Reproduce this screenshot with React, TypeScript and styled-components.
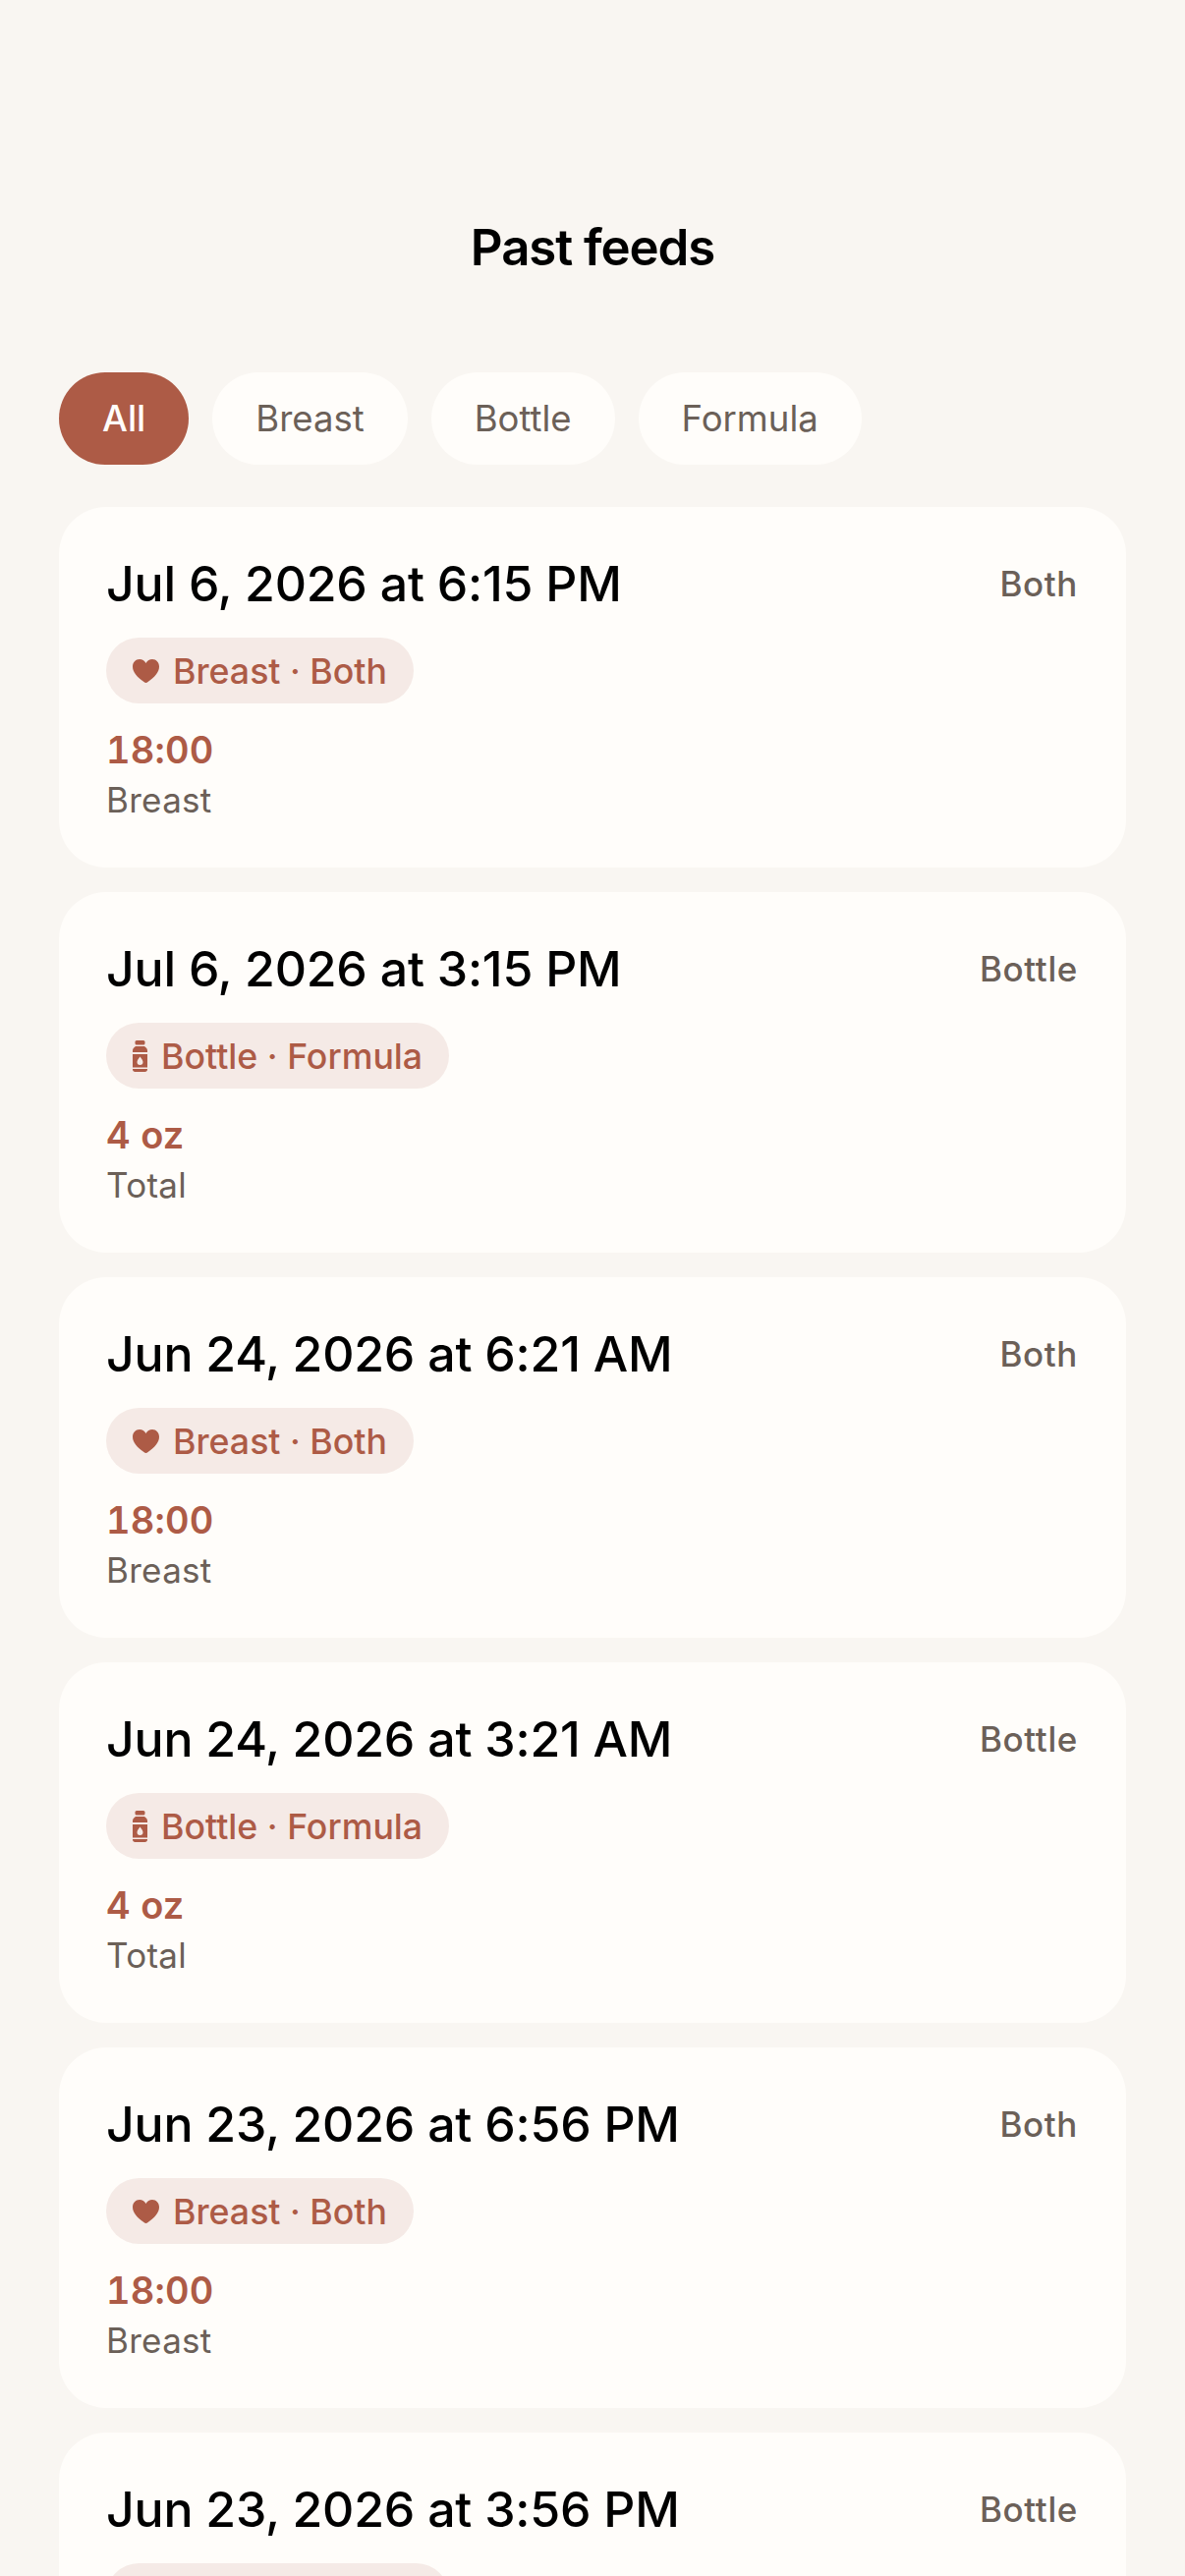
import React from "react";
import styled, { createGlobalStyle } from "styled-components";

const GlobalStyle = createGlobalStyle`
  html, body {
    margin: 0;
    padding: 0;
    background: #f9f6f2;
    font-family: "Inter", "Liberation Sans", sans-serif;
  }
`;

const Screen = styled.div`
  height: 2622px;
  overflow: hidden;
  padding: 0 60px;
  box-sizing: border-box;
`;

const Title = styled.h1`
  margin: 0;
  padding-top: 222px;
  height: 379px;
  box-sizing: border-box;
  text-align: center;
  font-size: 51px;
  line-height: 60px;
  font-weight: 600;
  letter-spacing: -1.1px;
  color: #000;
`;

const FilterRow = styled.div`
  display: flex;
  gap: 24px;
  margin-bottom: 43px;
`;

const FilterChip = styled.div<{ $active?: boolean }>`
  height: 94px;
  padding: 0 44px;
  border-radius: 47px;
  display: flex;
  align-items: center;
  font-size: 36.5px;
  font-weight: ${(props) => (props.$active ? 500 : 400)};
  color: ${(props) => (props.$active ? "#fffdfa" : "#6b6058")};
  background: ${(props) => (props.$active ? "#ad5b46" : "#fffdfa")};
`;

const FeedList = styled.div`
  display: flex;
  flex-direction: column;
  gap: 25px;
`;

const Card = styled.div`
  height: 367px;
  flex-shrink: 0;
  box-sizing: border-box;
  padding: 48px 49px 0 48px;
  border-radius: 48px;
  background: #fffdfa;
`;

const CardHead = styled.div`
  display: flex;
  justify-content: space-between;
  align-items: center;
  height: 60px;
`;

const FeedDate = styled.div`
  font-size: 50px;
  font-weight: 550;
  letter-spacing: -0.22px;
  color: #000;
`;

const FeedSide = styled.div`
  font-size: 35px;
  font-weight: 500;
  letter-spacing: 0.6px;
  color: #6b6058;
`;

const Badge = styled.div`
  display: inline-flex;
  align-items: center;
  gap: 14px;
  height: 67px;
  margin-top: 25px;
  padding: 0 27px;
  border-radius: 34px;
  background: #f5eae6;
  color: #ad5b46;
  font-size: 35.7px;
  font-weight: 450;
`;

const Amount = styled.div`
  margin-top: 24px;
  font-size: 38px;
  line-height: 46px;
  font-weight: 600;
  font-variant-numeric: tabular-nums;
  letter-spacing: 0.2px;
  color: #ad5b46;
`;

const AmountLabel = styled.div`
  margin-top: 6px;
  font-size: 35px;
  line-height: 44px;
  letter-spacing: 0.3px;
  color: #6b6058;
`;

const HeartIcon = () => (
  <svg width="27" height="24" viewBox="0 0 27 24" fill="#ad5b46">
    <path d="M13.5 24C12.9 24 12.2 23.6 11.4 23 5 18.6 0 13.6 0 7.6 0 3.2 3 0 7 0c2.8 0 5 1.4 6.5 4C15 1.4 17.200 0 20 0c4 0 7 3.200 7 7.600 0 6-5 11-11.400 15.400-.8.600-1.500 1-2.100 1z" />
  </svg>
);

const BottleIcon = () => (
  <svg width="15" height="32" viewBox="0 0 15 32" fill="#ad5b46">
    <rect x="2.500" y="0" width="10" height="4.500" rx="1.500" />
    <path
      fillRule="evenodd"
      d="M3 6h9c1.800 1.200 3 2.400 3 4.500V12H0v-1.500C0 8.400 1.200 7.200 3 6zM0 14h15v13.500H0V14zm7.500 2.600c-1.400 2-3 3.800-3 5.500a3 3 0 0 0 6 0c0-1.700-1.600-3.500-3-5.500zM0 29h15v.500c0 1.500-1 2.500-2.500 2.500h-10C1 32 0 31 0 29.500V29z"
    />
  </svg>
);

type Feed = {
  date: string;
  kind: "breast" | "bottle";
};

const feeds: Feed[] = [
  { date: "Jul 6, 2026 at 6:15 PM", kind: "breast" },
  { date: "Jul 6, 2026 at 3:15 PM", kind: "bottle" },
  { date: "Jun 24, 2026 at 6:21 AM", kind: "breast" },
  { date: "Jun 24, 2026 at 3:21 AM", kind: "bottle" },
  { date: "Jun 23, 2026 at 6:56 PM", kind: "breast" },
  { date: "Jun 23, 2026 at 3:56 PM", kind: "bottle" },
];

const FeedCard: React.FC<{ feed: Feed }> = ({ feed }) => {
  const isBreast = feed.kind === "breast";
  return (
    <Card>
      <CardHead>
        <FeedDate>{feed.date}</FeedDate>
        <FeedSide>{isBreast ? "Both" : "Bottle"}</FeedSide>
      </CardHead>
      <Badge>
        {isBreast ? <HeartIcon /> : <BottleIcon />}
        {isBreast ? "Breast · Both" : "Bottle · Formula"}
      </Badge>
      <Amount>{isBreast ? "18:00" : "4 oz"}</Amount>
      <AmountLabel>{isBreast ? "Breast" : "Total"}</AmountLabel>
    </Card>
  );
};

export default function App() {
  return (
    <Screen>
      <GlobalStyle />
      <Title>Past feeds</Title>
      <FilterRow>
        <FilterChip $active>All</FilterChip>
        <FilterChip>Breast</FilterChip>
        <FilterChip>Bottle</FilterChip>
        <FilterChip>Formula</FilterChip>
      </FilterRow>
      <FeedList>
        {feeds.map((feed) => (
          <FeedCard key={feed.date} feed={feed} />
        ))}
      </FeedList>
    </Screen>
  );
}
